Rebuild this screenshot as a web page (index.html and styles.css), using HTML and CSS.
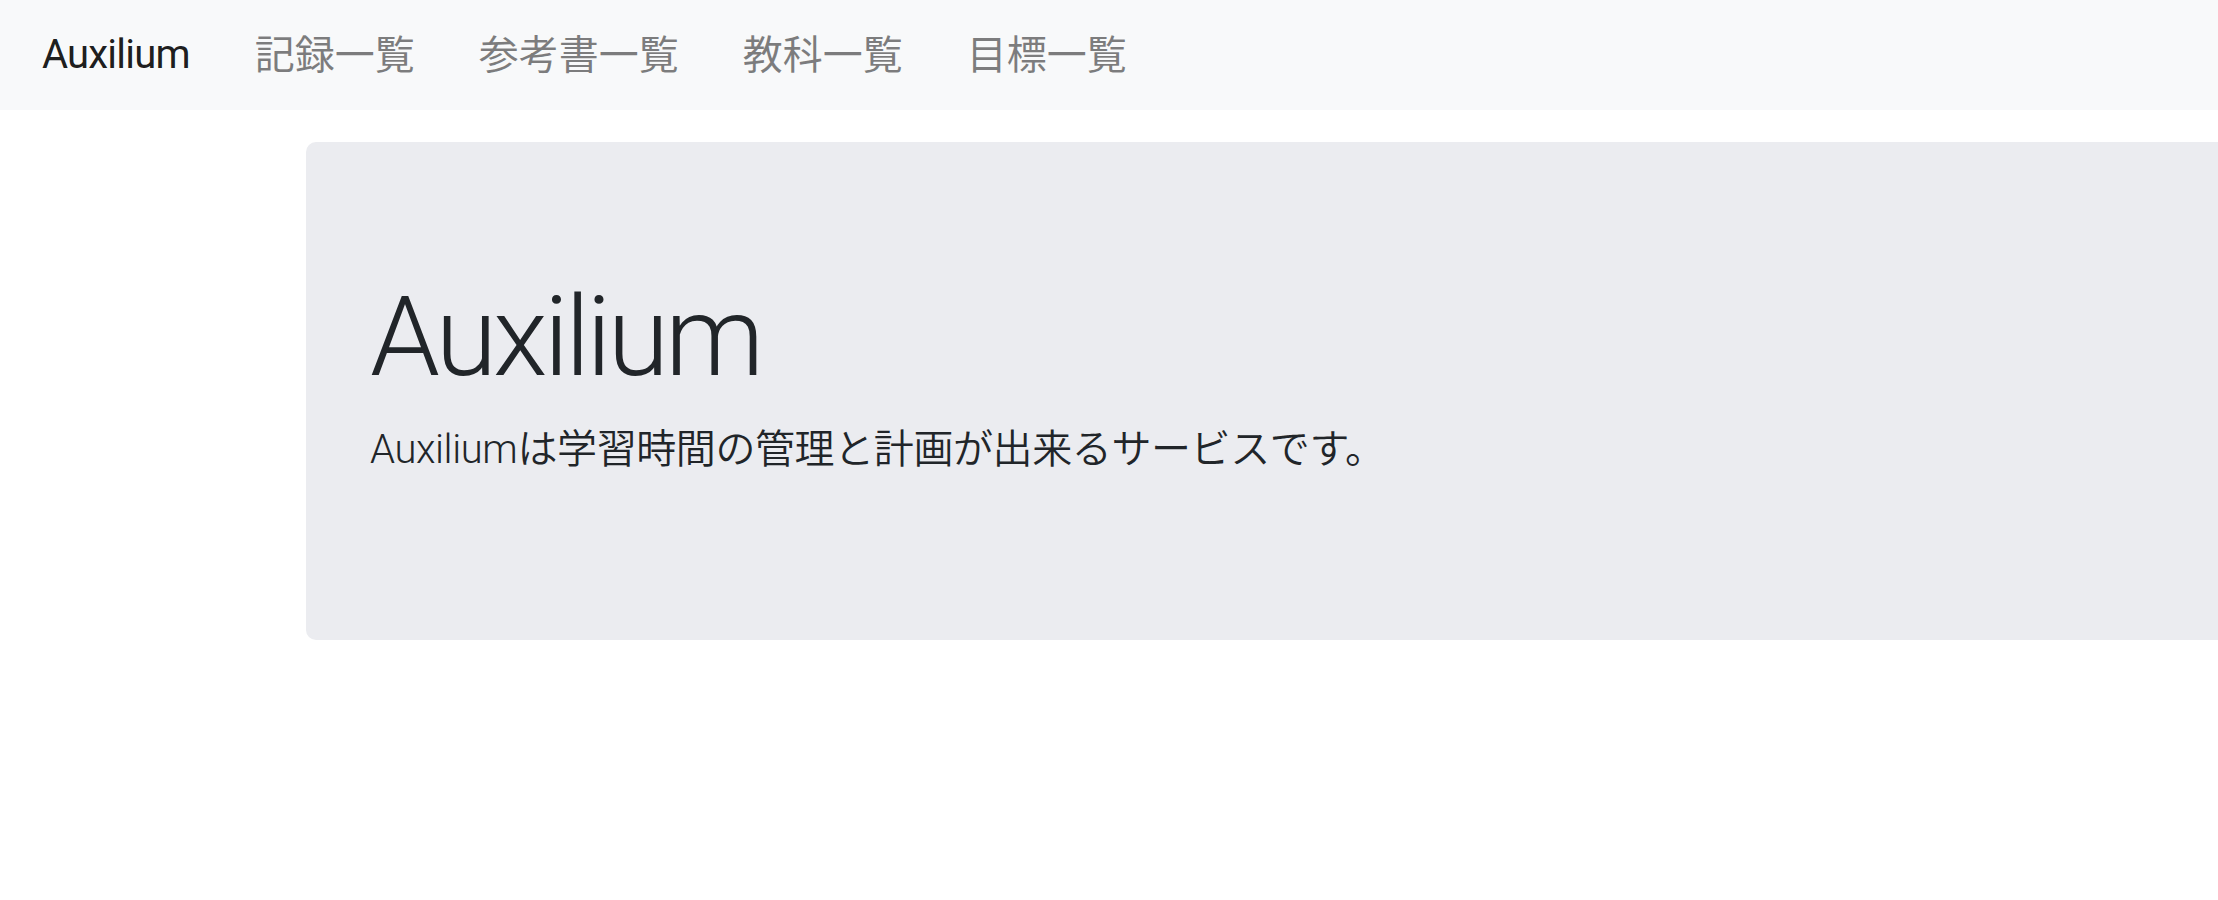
FILE: index.html
```html
<!DOCTYPE html>
<html lang="ja">
<head>
<meta charset="utf-8">
<title>Auxilium</title>
<link rel="stylesheet" href="styles.css">
</head>
<body>
<nav class="navbar">
  <a class="brand" href="#">Auxilium</a>
  <ul class="nav-links">
    <li><a href="#">記録一覧</a></li>
    <li><a href="#">参考書一覧</a></li>
    <li><a href="#">教科一覧</a></li>
    <li><a href="#">目標一覧</a></li>
  </ul>
</nav>
<main class="page">
  <section class="jumbotron">
    <h1 class="display">Auxilium</h1>
    <p class="lead">Auxiliumは学習時間の管理と計画が出来るサービスです。</p>
  </section>
</main>
</body>
</html>
```
FILE: styles.css
```css
html, body {
  margin: 0;
  padding: 0;
}
body {
  width: 2218px;
  height: 900px;
  overflow: hidden;
  background: #ffffff;
  font-family: Roboto, "Noto Sans CJK JP", sans-serif;
  color: #212529;
}
.navbar {
  height: 110px;
  background: #f8f9fa;
  display: flex;
  align-items: center;
  padding-left: 42px;
  padding-bottom: 6px;
  box-sizing: border-box;
}
.brand {
  font-size: 40px;
  color: rgba(0, 0, 0, 0.9);
  text-decoration: none;
  letter-spacing: -0.02em;
  margin-right: 65px;
  padding-top: 5px;
}
.nav-links {
  display: flex;
  gap: 64px;
  list-style: none;
  margin: 0;
  padding: 0;
}
.nav-links a {
  font-size: 40px;
  color: rgba(0, 0, 0, 0.5);
  text-decoration: none;
}
.page {
  padding-top: 32px;
  padding-left: 306px;
  overflow: hidden;
}
.jumbotron {
  background: #ebecf0;
  border-radius: 10px 0 0 10px;
  padding: 128px 64px;
  margin-right: -200px;
}
.display {
  font-size: 112px;
  font-weight: 300;
  line-height: 1.2;
  letter-spacing: -0.035em;
  margin: 0 0 16px 0;
}
.lead {
  font-size: 40px;
  font-weight: 350;
  line-height: 1.5;
  letter-spacing: -0.01em;
  margin: 0 0 32px 0;
}
```
